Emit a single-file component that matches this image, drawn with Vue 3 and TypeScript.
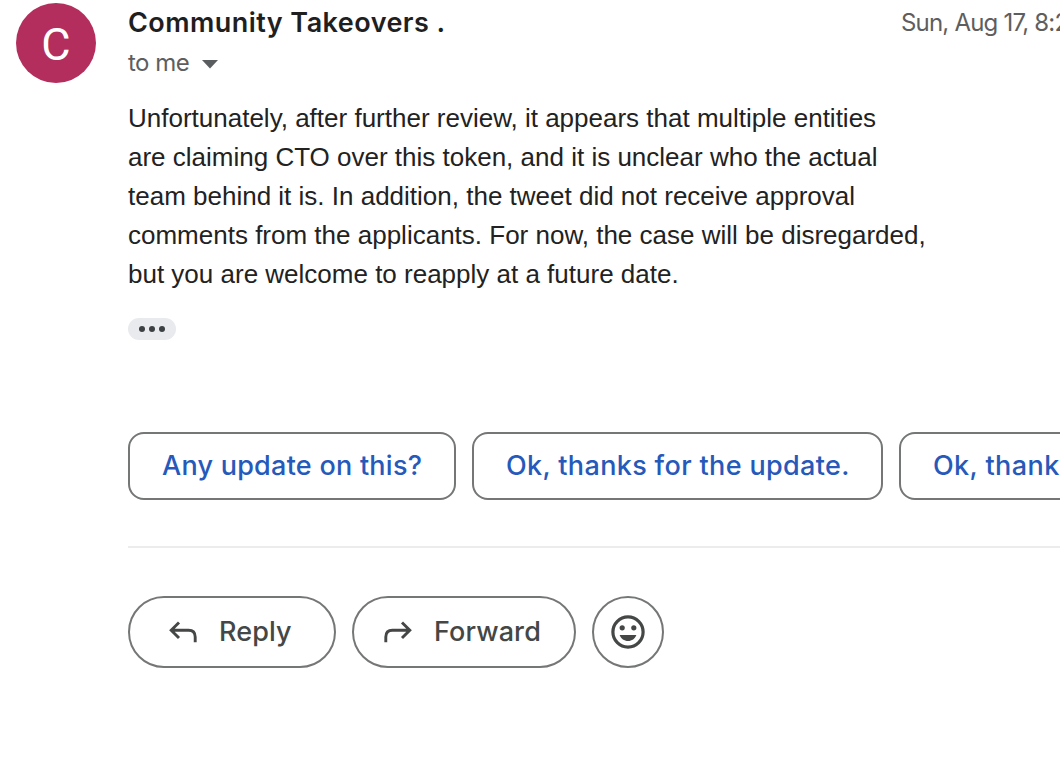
<script setup lang="ts">
interface Suggestion {
  id: string
  text: string
}

const bodyLines: string[] = [
  'Unfortunately, after further review, it appears that multiple entities',
  'are claiming CTO over this token, and it is unclear who the actual',
  'team behind it is. In addition, the tweet did not receive approval',
  'comments from the applicants. For now, the case will be disregarded,',
  'but you are welcome to reapply at a future date.',
]

const suggestions: Suggestion[] = [
  { id: 'ask', text: 'Any update on this?' },
  { id: 'update', text: 'Ok, thanks for the update.' },
  { id: 'thanks', text: 'Ok, thank you.' },
]
</script>

<template>
  <main class="message">
    <div class="avatar"><span>C</span></div>
    <section class="content">
      <header class="head">
        <h1 class="sender">Community Takeovers .</h1>
        <time class="date">Sun, Aug 17, 8:20 PM</time>
      </header>
      <div class="recipient">
        <span class="to">to me</span>
        <svg class="caret" width="16" height="9" viewBox="0 0 16 9"><path d="M0 0H16L8 8.5Z" fill="#5a5d60" /></svg>
      </div>
      <p class="body">
        <span v-for="line in bodyLines" :key="line" class="line">{{ line }}</span>
      </p>
      <button class="more" aria-label="Show trimmed content"><i /><i /><i /></button>
      <div class="suggestions">
        <button v-for="s in suggestions" :key="s.id" class="chip" :class="s.id">
          <span>{{ s.text }}</span>
        </button>
      </div>
      <hr class="divider" />
      <div class="actions">
        <button class="action reply">
          <svg width="30" height="24" viewBox="0 0 30 24" fill="none" stroke="#444746" stroke-width="2.9">
            <path d="M11 2.5L3.2 10.2L11 18M3.2 10.2H20.5Q27.2 10.2 27.2 17V22.3" />
          </svg>
          <span>Reply</span>
        </button>
        <button class="action forward">
          <svg width="30" height="24" viewBox="0 0 30 24" fill="none" stroke="#444746" stroke-width="2.9">
            <path d="M19 2.5L26.8 10.2L19 18M26.8 10.2H9.5Q2.8 10.2 2.8 17V22.3" />
          </svg>
          <span>Forward</span>
        </button>
        <button class="action react" aria-label="Add reaction">
          <svg width="36" height="36" viewBox="0 0 36 36">
            <circle cx="18" cy="18" r="15.1" fill="none" stroke="#444746" stroke-width="3.2" />
            <circle cx="12.2" cy="13.8" r="2.6" fill="#444746" />
            <circle cx="23.8" cy="13.8" r="2.6" fill="#444746" />
            <path d="M9.6 21H26.4C25 24.7 21.9 27 18 27S11 24.7 9.6 21Z" fill="#444746" />
          </svg>
        </button>
      </div>
    </section>
  </main>
</template>

<style>
body {
  background: #fff;
  overflow: hidden;
}
</style>

<style scoped>
.message {
  display: flex;
  width: 1060px;
  height: 784px;
  box-sizing: border-box;
  padding: 3px 0 0 16px;
  gap: 32px;
  overflow: hidden;
  background: #fff;
  font-family: Inter, Roboto, 'Liberation Sans', sans-serif;
  white-space: nowrap;
}
.avatar {
  flex: none;
  width: 80px;
  height: 80px;
  border-radius: 50%;
  background: #b32e5d;
  color: #fff;
  font: 400 45px/83px Roboto, sans-serif;
  text-align: center;
}
.content {
  flex: none;
  width: 932px;
}
.head {
  display: flex;
  height: 40px;
}
.sender {
  margin: 0;
  width: 773px;
  flex: none;
  font-size: 27px;
  line-height: 39px;
  font-weight: 600;
  letter-spacing: 0.45px;
  color: #1f1f1f;
}
.date {
  font-size: 24px;
  line-height: 39px;
  letter-spacing: -0.8px;
  color: #5e5e5e;
}
.recipient {
  display: flex;
  align-items: center;
  height: 40px;
  gap: 13px;
  color: #5e5e5e;
}
.to {
  margin-top: -2px;
  font-size: 24px;
  letter-spacing: -0.5px;
}
.caret {
  margin-top: 2px;
}
.body {
  margin: 16px 0 0;
  font: 26px/39px 'Liberation Sans', sans-serif;
  color: #222;
}
.line {
  display: block;
}
button {
  box-sizing: border-box;
  padding: 0;
  margin: 0;
  font-family: inherit;
  background: #fff;
}
.more {
  display: flex;
  width: 48px;
  height: 22px;
  margin-top: 24px;
  align-items: center;
  justify-content: center;
  gap: 3.5px;
  border: 0;
  border-radius: 11px;
  background: #e8eaed;
}
.more i {
  width: 6.5px;
  height: 6.5px;
  border-radius: 50%;
  background: #3c4043;
}
.suggestions {
  display: flex;
  gap: 16px;
  margin-top: 92px;
}
.chip {
  flex: none;
  width: 328px;
  height: 68px;
  border: 2px solid #747775;
  border-radius: 16px;
  padding: 0 0 2px 32px;
  text-align: left;
  font-size: 27px;
  font-weight: 500;
  letter-spacing: 0.25px;
  color: #2659ba;
}
.chip.update {
  width: 411px;
  letter-spacing: 0.35px;
}
.chip.thanks {
  letter-spacing: 0.4px;
}
.divider {
  width: 100%;
  height: 2px;
  margin: 46px 0 0;
  border: 0;
  background: #ececec;
}
.actions {
  display: flex;
  gap: 16px;
  margin-top: 48px;
}
.action {
  display: flex;
  align-items: center;
  width: 208px;
  height: 72px;
  border: 2px solid #747775;
  border-radius: 36px;
  padding: 0 0 0 38px;
  gap: 21px;
  font-size: 27px;
  font-weight: 500;
  letter-spacing: 0.1px;
  color: #444746;
}
.action svg {
  flex: none;
}
.action span {
  margin-top: -2px;
}
.forward {
  width: 224px;
  padding-left: 29px;
}
.react {
  width: 72px;
  padding: 0;
  justify-content: center;
}
</style>
